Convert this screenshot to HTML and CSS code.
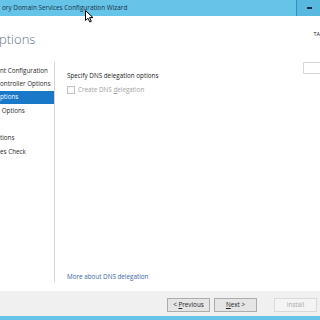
FILE: index.html
```html
<!DOCTYPE html>
<html lang="en">
<head>
    <meta charset="UTF-8">
    <title>Active Directory Domain Services Configuration Wizard</title>
    <link rel="stylesheet" href="styles.css">
</head>
<body>
<div id="wizard">
    <div id="title-bar">
        <span class="title-text">ory Domain Services Configuration Wizard</span>
        <div class="min-button"><span class="min-glyph"></span></div>
    </div>

    <div id="main">
        <div id="header">
            <div class="page-title">ptions</div>
            <div class="target">TA</div>
        </div>
        <div id="notice-box"></div>

        <div id="body">
            <div id="nav">
                <div class="nav-item">nt Configuration</div>
                <div class="nav-item">ontroller Options</div>
                <div class="nav-item selected">ptions</div>
                <div class="nav-item">&nbsp;Options</div>
                <div class="nav-item"></div>
                <div class="nav-item">tions</div>
                <div class="nav-item">es Check</div>
            </div>
            <div id="content">
                <div class="section-label">Specify DNS delegation options</div>
                <label class="check-row">
                    <span class="checkbox"></span>
                    <span>Create DNS <u>d</u>elegation</span>
                </label>
                <div class="spacer"></div>
                <a class="more-link" href="#">More about DNS delegation</a>
            </div>
        </div>
    </div>

    <div id="footer">
        <button class="wiz-button">&lt; <u>P</u>revious</button>
        <button class="wiz-button"><u>N</u>ext &gt;</button>
        <button class="wiz-button install" disabled>Install</button>
    </div>
    <div id="bottom-border"></div>

    <!-- mouse pointer sits over the title bar -->
    <svg class="pointer" width="9" height="13" viewBox="0 0 9 13">
        <path d="M0.5 0.5 L0.5 10.5 L3 8.2 L4.8 12 L6.3 11.3 L4.6 7.6 L8 7.6 Z" fill="#fff" stroke="#000" stroke-width="1"/>
    </svg>
</div>
</body>
</html>
```

FILE: styles.css
```css
body {
    margin: 0;
    font-family: 'Open Sans', 'Liberation Sans', sans-serif;
    background-color: #ffffff;
}
#wizard {
    position: relative;
    width: 320px;
    height: 320px;
    overflow: hidden;
    display: flex;
    flex-direction: column;
    background-color: #ffffff;
}
#title-bar {
    height: 16px;
    background-color: #65c4e7;
    display: flex;
    align-items: center;
    justify-content: space-between;
}
.title-text {
    font-size: 6.4px;
    color: #1d3148;
    padding-left: 2px;
    padding-bottom: 1px;
}
.min-button {
    width: 23px;
    height: 16px;
    background-color: #58b8df;
    border-left: 1px solid #3b8fb5;
    display: flex;
    align-items: center;
    justify-content: center;
}
.min-glyph {
    width: 5px;
    height: 2px;
    background-color: #1a2c44;
    margin-left: 1px;
}
#main {
    flex: 1;
    display: flex;
    flex-direction: column;
    min-height: 0;
}
#header {
    height: 30px;
    display: flex;
    justify-content: space-between;
    align-items: flex-start;
}
.page-title {
    font-size: 13px;
    font-weight: 300;
    color: #5e6f82;
    margin-top: 14px;
    margin-left: -1px;
}
.target {
    font-size: 5.5px;
    color: #222;
    margin-top: 14px;
}
#notice-box {
    align-self: flex-end;
    width: 20px;
    height: 10px;
    border: 1px solid #d6d6d6;
    margin-top: 16px;
    margin-right: -5px;
    margin-bottom: -27px;
}
#body {
    flex: 1;
    display: flex;
    padding-top: 15px;
    padding-bottom: 9px;
}
#nav {
    width: 54px;
    border-right: 1px solid #d4d4d4;
    font-size: 6.3px;
    color: #2b2b2b;
    padding-top: 1.5px;
}
.nav-item {
    height: 13.5px;
    line-height: 13.5px;
    white-space: nowrap;
    overflow: hidden;
}
.nav-item.selected {
    background-color: #1a78c8;
    color: #ffffff;
    height: 12.5px;
    line-height: 12.5px;
    margin: 0.5px 0;
}
#content {
    flex: 1;
    display: flex;
    flex-direction: column;
    padding-left: 12px;
    padding-top: 9px;
    font-size: 6.3px;
    color: #222;
}
.section-label {
    height: 10px;
    line-height: 10px;
}
.check-row {
    display: flex;
    align-items: center;
    gap: 3px;
    margin-top: 4px;
    color: #a3a3a3;
}
.checkbox {
    width: 6px;
    height: 6px;
    border: 1px solid #c4c4c4;
    background-color: #fafafa;
}
.spacer {
    flex: 1;
}
.more-link {
    color: #3b63a8;
    text-decoration: none;
    line-height: 10px;
}
#footer {
    height: 25px;
    background-color: #f0f0f0;
    display: flex;
    align-items: center;
    padding-left: 167px;
    gap: 4px;
}
.wiz-button {
    width: 43px;
    height: 14px;
    padding: 0;
    margin-top: 2px;
    font-family: 'Open Sans', 'Liberation Sans', sans-serif;
    font-size: 6.3px;
    color: #222;
    background-color: #e5e5e5;
    border: 1px solid #acacac;
    border-radius: 0;
}
.wiz-button.install {
    margin-left: 13px;
    color: #a8a8a8;
    background-color: #f4f4f4;
    border-color: #d9d9d9;
}
#bottom-border {
    height: 4px;
    background-color: #65c4e7;
}
.pointer {
    position: absolute;
    left: 85px;
    top: 10px;
}
```
